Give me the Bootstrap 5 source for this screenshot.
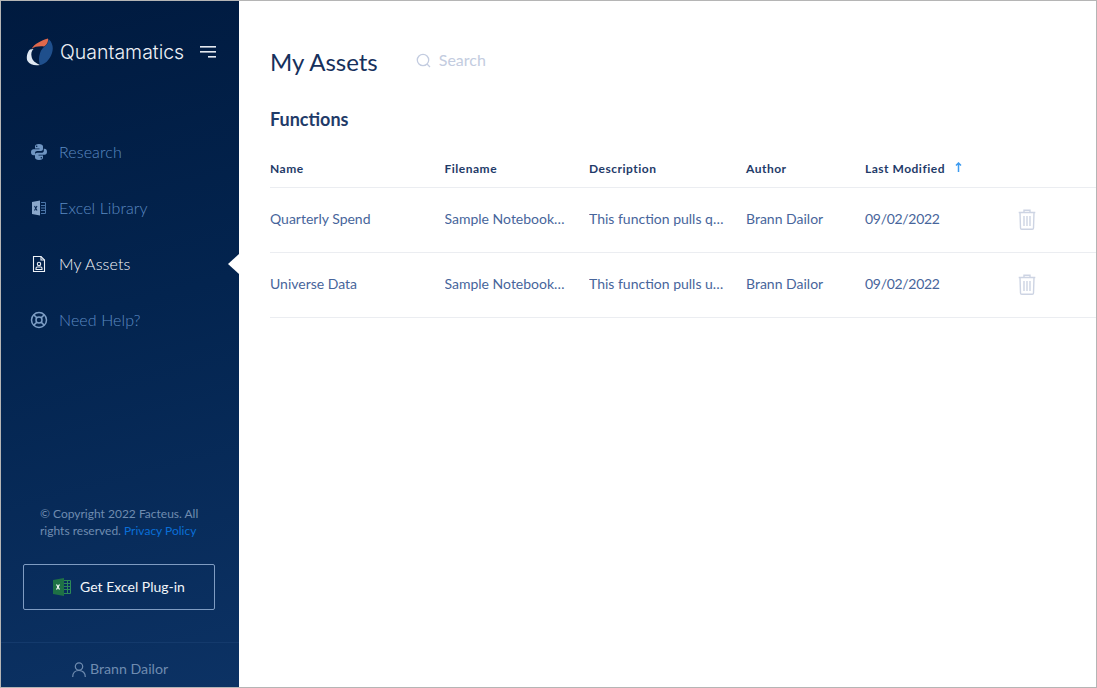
<!DOCTYPE html>
<html lang="en">
  <head>
    <meta charset="UTF-8" />
    <title>My Assets</title>
    <link href="https://cdn.jsdelivr.net/npm/bootstrap@5.3.3/dist/css/bootstrap.min.css" rel="stylesheet" />
    <style>
      html, body { height: 100%; }
      body {
        font-family: Lato, "Liberation Sans", sans-serif;
        background: #fff;
        overflow: hidden;
      }
      .app-frame {
        height: 688px;
        border: 1px solid #b5b5b5;
        overflow: hidden;
      }
      .side-panel {
        width: 238px;
        flex: none;
        background: linear-gradient(165deg, #001a3f 0%, #03244f 45%, #0c3264 100%);
      }
      .brand-row { padding: 37px 0 0 25px; height: 101px; }
      .brand-name {
        font-family: Inter, "Open Sans", sans-serif;
        font-size: 19.500px;
        font-weight: 300;
        line-height: 28px;
        color: #eef1f6;
        margin-left: 6px;
        margin-right: 16px;
      }
      .side-link {
        height: 56px;
        padding-left: 29px;
        font-size: 16px;
        font-weight: 300;
        letter-spacing: 0.1px;
        color: #5b8ac2;
        text-decoration: none;
        position: relative;
      }
      .side-link svg { width: 18px; height: 18px; margin-right: 11px; flex: none; }
      .side-link.is-current { color: #f7f9fb; }
      .side-link.is-current::after {
        content: "";
        position: absolute;
        right: 0;
        top: 18px;
        border-style: solid;
        border-width: 10px 11px 10px 0;
        border-color: transparent #fff transparent transparent;
      }
      .nav-stack { margin-top: 22px; }
      .legal-note {
        font-size: 12px;
        line-height: 17px;
        color: #6f8cb0;
        padding: 0 39px;
        margin-bottom: 25px;
      }
      .legal-note a { color: #0a6fd8; text-decoration: none; }
      .plugin-btn {
        width: 192px;
        height: 46px;
        margin: 0 0 32px 22px;
        border: 1px solid #7f9cc2;
        border-radius: 2px;
        color: #f2f5f9;
        font-size: 14px;
      }
      .plugin-btn:hover { color: #fff; }
      .plugin-btn svg { margin-right: 9px; }
      .plugin-label { margin-top: -2px; }
      .user-strip {
        height: 45px;
        border-top: 1px solid #143a6c;
        color: #6f8cb0;
        font-size: 14.2px;
        padding-top: 8px;
      }
      .main-pane { padding: 0 0 0 31px; min-width: 0; color: #1f3b69; }
      .head-row { height: 106px; padding-top: 15px; }
      .page-title {
        font-size: 24px;
        font-weight: 400;
        line-height: 36px;
        color: #16305c;
        margin: 0 38px 0 0;
      }
      .search-box { color: #c3cce0; font-size: 16px; gap: 8px; margin-top: -3px; }
      .search-field {
        border: 0;
        outline: 0;
        padding: 0;
        width: 120px;
        font: inherit;
        color: inherit;
      }
      .search-field::placeholder { color: #c3cce0; opacity: 1; }
      .section-title {
        font-size: 18px;
        font-weight: 700;
        line-height: 24px;
        color: #1f3b69;
        margin: 0 0 19px;
      }
      .asset-grid { table-layout: fixed; width: 827px; margin: 0; }
      .asset-grid th {
        font-size: 12px;
        font-weight: 700;
        letter-spacing: 0.5px;
        color: #1f3b69;
        height: 37px;
        padding: 2px 0 0;
        vertical-align: middle;
        border-bottom: 1px solid #ebedf1;
      }
      .asset-grid td {
        font-size: 14px;
        color: #47659b;
        height: 65px;
        padding: 0 20px 3px 0;
        vertical-align: middle;
        border-bottom: 1px solid #ebedf1;
        white-space: nowrap;
        overflow: hidden;
        text-overflow: ellipsis;
      }
      .asset-grid td.file-cell { padding-right: 23px; }
      .date-text { letter-spacing: -0.3px; }
      .sort-mark { color: #3d9bf0; margin-left: 7px; width: 7px; height: 10px; vertical-align: 1px; }
      .trash-mark { width: 18px; height: 21px; display: block; margin-top: 3px; margin-right: 61px; }
      .asset-grid td.trash-cell { overflow: visible; padding-right: 0; }
    </style>
  </head>
  <body>
    <div class="app-frame d-flex">
      <aside class="side-panel d-flex flex-column">
        <div class="brand-row d-flex align-items-start">
          <svg width="28" height="28" viewBox="0 0 28 28">
            <path d="M22.500 1C26 4 28 9 26 15C24 22 18 27 14 27C12 22 13 13 18 9C21 7 22.500 4 22.500 1Z" fill="#1f4f8c" />
            <path d="M5.500 11C8 6 15 2.500 22 .5C22.500 3 21 7 18 8.500C14 8 8 8.500 5.500 11Z" fill="#e0694c" />
            <path d="M4 11.500C1 14 0 20 1.500 23C4 27 9 28 14 27C10 25 6 23 5.500 18C5 15.500 5.500 13 7.500 11Z" fill="#dfe8f2" />
          </svg>
          <span class="brand-name">Quantamatics</span>
          <svg class="mt-2" width="16" height="12" viewBox="0 0 16 12" fill="#e4e9f0">
            <rect width="16" height="1.600" y="0" />
            <rect width="16" height="1.600" y="5" />
            <rect x="8" width="8" height="1.600" y="10" />
          </svg>
        </div>
        <nav class="nav-stack">
          <a class="side-link d-flex align-items-center" href="#">
            <svg viewBox="0 0 18 18" fill="#6f95c2">
              <path d="M9 1C6 1 5 2 5 3.500V5.500H9.500V6.200H3.500C2 6.200 1 7.300 1 9.200C1 11.100 2 12.200 3.500 12.200H5V10.200C5 8.800 6 8 7.300 8H11C12.200 8 13 7.200 13 6V3.500C13 2 11.500 1 9 1ZM6.700 2.500A.8.8 0 1 1 6.700 4.100A.8.8 0 0 1 6.700 2.500Z" />
              <path d="M9 17C12 17 13 16 13 14.500V12.500H8.500V11.800H14.500C16 11.800 17 10.700 17 8.800C17 6.900 16 5.800 14.500 5.800H13.800V7.800C13.800 9.200 12.800 9.800 11.500 9.800H7C5.800 9.800 5 10.600 5 11.800V14.500C5 16 6.500 17 9 17ZM11.300 15.500A.8.8 0 1 1 11.300 13.900A.8.8 0 0 1 11.300 15.500Z" />
            </svg>
            Research
          </a>
          <a class="side-link d-flex align-items-center" href="#">
            <svg viewBox="0 0 18 18">
              <path d="M2 3L10 1.500V16.500L2 15Z" fill="#8aa8cc" />
              <path d="M4.500 7L7 11.500M7 7L4.500 11.500" stroke="#0b2a55" stroke-width="1.100" />
              <path d="M11 3.500H15.500V14.500H11M11 6.500H15.500M11 9H15.500M11 11.500H15.500" stroke="#4a75a8" fill="none" />
            </svg>
            Excel Library
          </a>
          <a class="side-link is-current d-flex align-items-center" href="#">
            <svg viewBox="0 0 18 18" fill="none" stroke="#eef2f7" stroke-width="1.100">
              <path d="M3.500 1.500H11L14.500 5V16.500H3.500Z" />
              <path d="M11 1.500V5H14.500" />
              <circle cx="9" cy="9" r="1.700" />
              <path d="M6 14.500V13.200C6 12.500 6.500 12 7.200 12H10.800C11.500 12 12 12.500 12 13.200V14.500Z" />
            </svg>
            My Assets
          </a>
          <a class="side-link d-flex align-items-center" href="#">
            <svg viewBox="0 0 18 18" fill="none" stroke="#7f9fc6" stroke-width="1.500">
              <circle cx="9" cy="9" r="7.500" />
              <circle cx="9" cy="9" r="3" />
              <path d="M3.700 3.700L6.900 6.900M14.300 3.700L11.100 6.900M3.700 14.300L6.900 11.100M14.300 14.300L11.100 11.100" />
            </svg>
            Need Help?
          </a>
        </nav>
        <div class="mt-auto">
          <p class="legal-note">© Copyright 2022 Facteus. All rights reserved. <a href="#">Privacy Policy</a></p>
          <a class="plugin-btn btn d-flex align-items-center justify-content-center p-0" href="#">
            <svg width="18" height="18" viewBox="0 0 18 18">
              <path d="M0 2L11 0V18L0 16Z" fill="#1e7145" />
              <path d="M3.500 6.500L6.500 11.500M6.500 6.500L3.500 11.500" stroke="#fff" stroke-width="1.200" />
              <path d="M11 2.500H17.500V15.500H11M11 5.500H17.500M11 8.500H17.500M11 11.500H17.500M14.500 2.500V15.500" stroke="#2c8a57" fill="none" />
            </svg>
            <span class="plugin-label">Get Excel Plug-in</span>
          </a>
          <div class="user-strip d-flex align-items-center justify-content-center">
            <svg class="me-1" width="14" height="15" viewBox="0 0 14 15" fill="none" stroke="#6f8cb0" stroke-width="1.200">
              <circle cx="7" cy="4.500" r="3.700" />
              <path d="M.7 15C.7 11 3 8.500 7 8.500S13.300 11 13.300 15" />
            </svg>
            Brann Dailor
          </div>
        </div>
      </aside>
      <main class="main-pane flex-grow-1">
        <div class="head-row d-flex align-items-center">
          <h1 class="page-title">My Assets</h1>
          <label class="search-box d-flex align-items-center">
            <svg width="15" height="15" viewBox="0 0 15 15" fill="none" stroke="#c3cce0" stroke-width="1.300">
              <circle cx="7" cy="7" r="5.700" />
              <path d="M11 11L14 14" />
            </svg>
            <input class="search-field" type="text" placeholder="Search" />
          </label>
        </div>
        <h2 class="section-title">Functions</h2>
        <table class="asset-grid">
          <colgroup>
            <col style="width: 174.500px" />
            <col style="width: 144.500px" />
            <col style="width: 157px" />
            <col style="width: 119px" />
            <col />
          </colgroup>
          <thead>
            <tr>
              <th>Name</th>
              <th>Filename</th>
              <th>Description</th>
              <th>Author</th>
              <th>
                Last Modified
                <svg class="sort-mark" viewBox="0 0 7 10" fill="none" stroke="currentColor" stroke-width="1.500">
                  <path d="M3.500 10V1M1 3.500L3.500 1L6 3.500" />
                </svg>
              </th>
            </tr>
          </thead>
          <tbody>
            <tr>
              <td>Quarterly Spend</td>
              <td class="file-cell">Sample Notebook 1.ipynb</td>
              <td>This function pulls quarterly spend</td>
              <td>Brann Dailor</td>
              <td class="trash-cell">
                <div class="d-flex align-items-center justify-content-between">
                  <span class="date-text">09/02/2022</span>
                  <svg class="trash-mark" viewBox="0 0 18 21" fill="none" stroke="#cdd4e3" stroke-width="1.400">
                    <path d="M.7 3.500H17.300M6 3.500V1.200H12V3.500M2 3.500L2.500 19C2.500 19.800 3 20.300 3.800 20.300H14.200C15 20.300 15.500 19.800 15.500 19L16 3.500" />
                    <path d="M6 7V17M9 7V17M12 7V17" />
                  </svg>
                </div>
              </td>
            </tr>
            <tr>
              <td>Universe Data</td>
              <td class="file-cell">Sample Notebook 2.ipynb</td>
              <td>This function pulls universe data</td>
              <td>Brann Dailor</td>
              <td class="trash-cell">
                <div class="d-flex align-items-center justify-content-between">
                  <span class="date-text">09/02/2022</span>
                  <svg class="trash-mark" viewBox="0 0 18 21" fill="none" stroke="#cdd4e3" stroke-width="1.400">
                    <path d="M.7 3.500H17.300M6 3.500V1.200H12V3.500M2 3.500L2.500 19C2.500 19.800 3 20.300 3.800 20.300H14.200C15 20.300 15.500 19.800 15.500 19L16 3.500" />
                    <path d="M6 7V17M9 7V17M12 7V17" />
                  </svg>
                </div>
              </td>
            </tr>
          </tbody>
        </table>
      </main>
    </div>
    <script src="https://cdn.jsdelivr.net/npm/bootstrap@5.3.3/dist/js/bootstrap.bundle.min.js"></script>
  </body>
</html>
